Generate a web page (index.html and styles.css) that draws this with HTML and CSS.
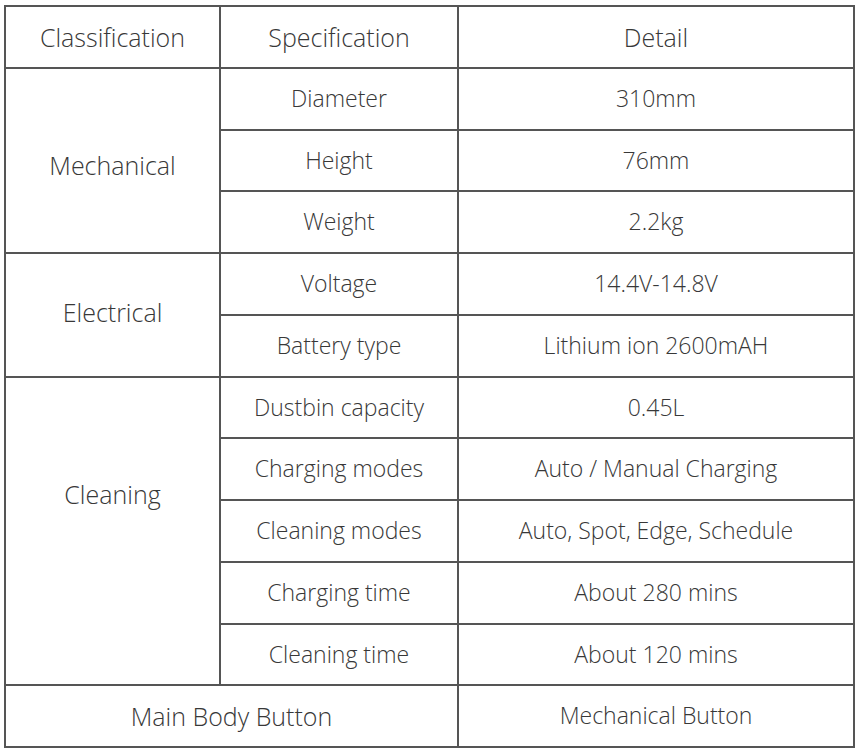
FILE: index.html
```html
<!DOCTYPE html>
<html>
<head>
<meta charset="utf-8">
<link rel="stylesheet" href="styles.css">
</head>
<body>
<table class="spec">
  <colgroup>
    <col class="c1"><col class="c2"><col class="c3">
  </colgroup>
  <thead>
    <tr><th>Classification</th><th>Specification</th><th>Detail</th></tr>
  </thead>
  <tbody>
    <tr><td class="cat cat-mech" rowspan="3">Mechanical</td><td>Diameter</td><td>310mm</td></tr>
    <tr><td>Height</td><td>76mm</td></tr>
    <tr><td>Weight</td><td>2.2kg</td></tr>
    <tr><td class="cat cat-elec" rowspan="2">Electrical</td><td>Voltage</td><td>14.4V-14.8V</td></tr>
    <tr><td>Battery type</td><td>Lithium ion 2600mAH</td></tr>
    <tr><td class="cat cat-clean" rowspan="5">Cleaning</td><td>Dustbin capacity</td><td>0.45L</td></tr>
    <tr><td>Charging modes</td><td>Auto / Manual Charging</td></tr>
    <tr><td>Cleaning modes</td><td>Auto, Spot, Edge, Schedule</td></tr>
    <tr><td>Charging time</td><td>About 280 mins</td></tr>
    <tr><td>Cleaning time</td><td>About 120 mins</td></tr>
    <tr><td class="cat" colspan="2">Main Body Button</td><td>Mechanical Button</td></tr>
  </tbody>
</table>
</body>
</html>
```
FILE: styles.css
```css
html, body {
  margin: 0;
  padding: 0;
  background: #ffffff;
}
body {
  padding: 5px 0 0 4px;
  font-family: "Open Sans", "Noto Sans", sans-serif;
  color: #383838;
}
.spec {
  border-collapse: collapse;
  width: 849px;
  table-layout: fixed;
}
.c1 { width: 215px; }
.c2 { width: 238px; }
.c3 { width: 396px; }
.spec th, .spec td {
  border: 2px solid #555555;
  height: 59.75px;
  padding: 0;
  text-align: center;
  vertical-align: middle;
  font-size: 23px;
  font-weight: 350;
  line-height: 1.2;
}
.spec th {
  font-size: 25px;
  font-weight: 350;
}
.spec td.cat {
  font-size: 25px;
}
.spec td.cat-mech {
  padding-top: 10px;
}
.spec td.cat-elec {
  padding-bottom: 6px;
}
.spec td.cat-clean {
  padding-bottom: 74px;
}
```
